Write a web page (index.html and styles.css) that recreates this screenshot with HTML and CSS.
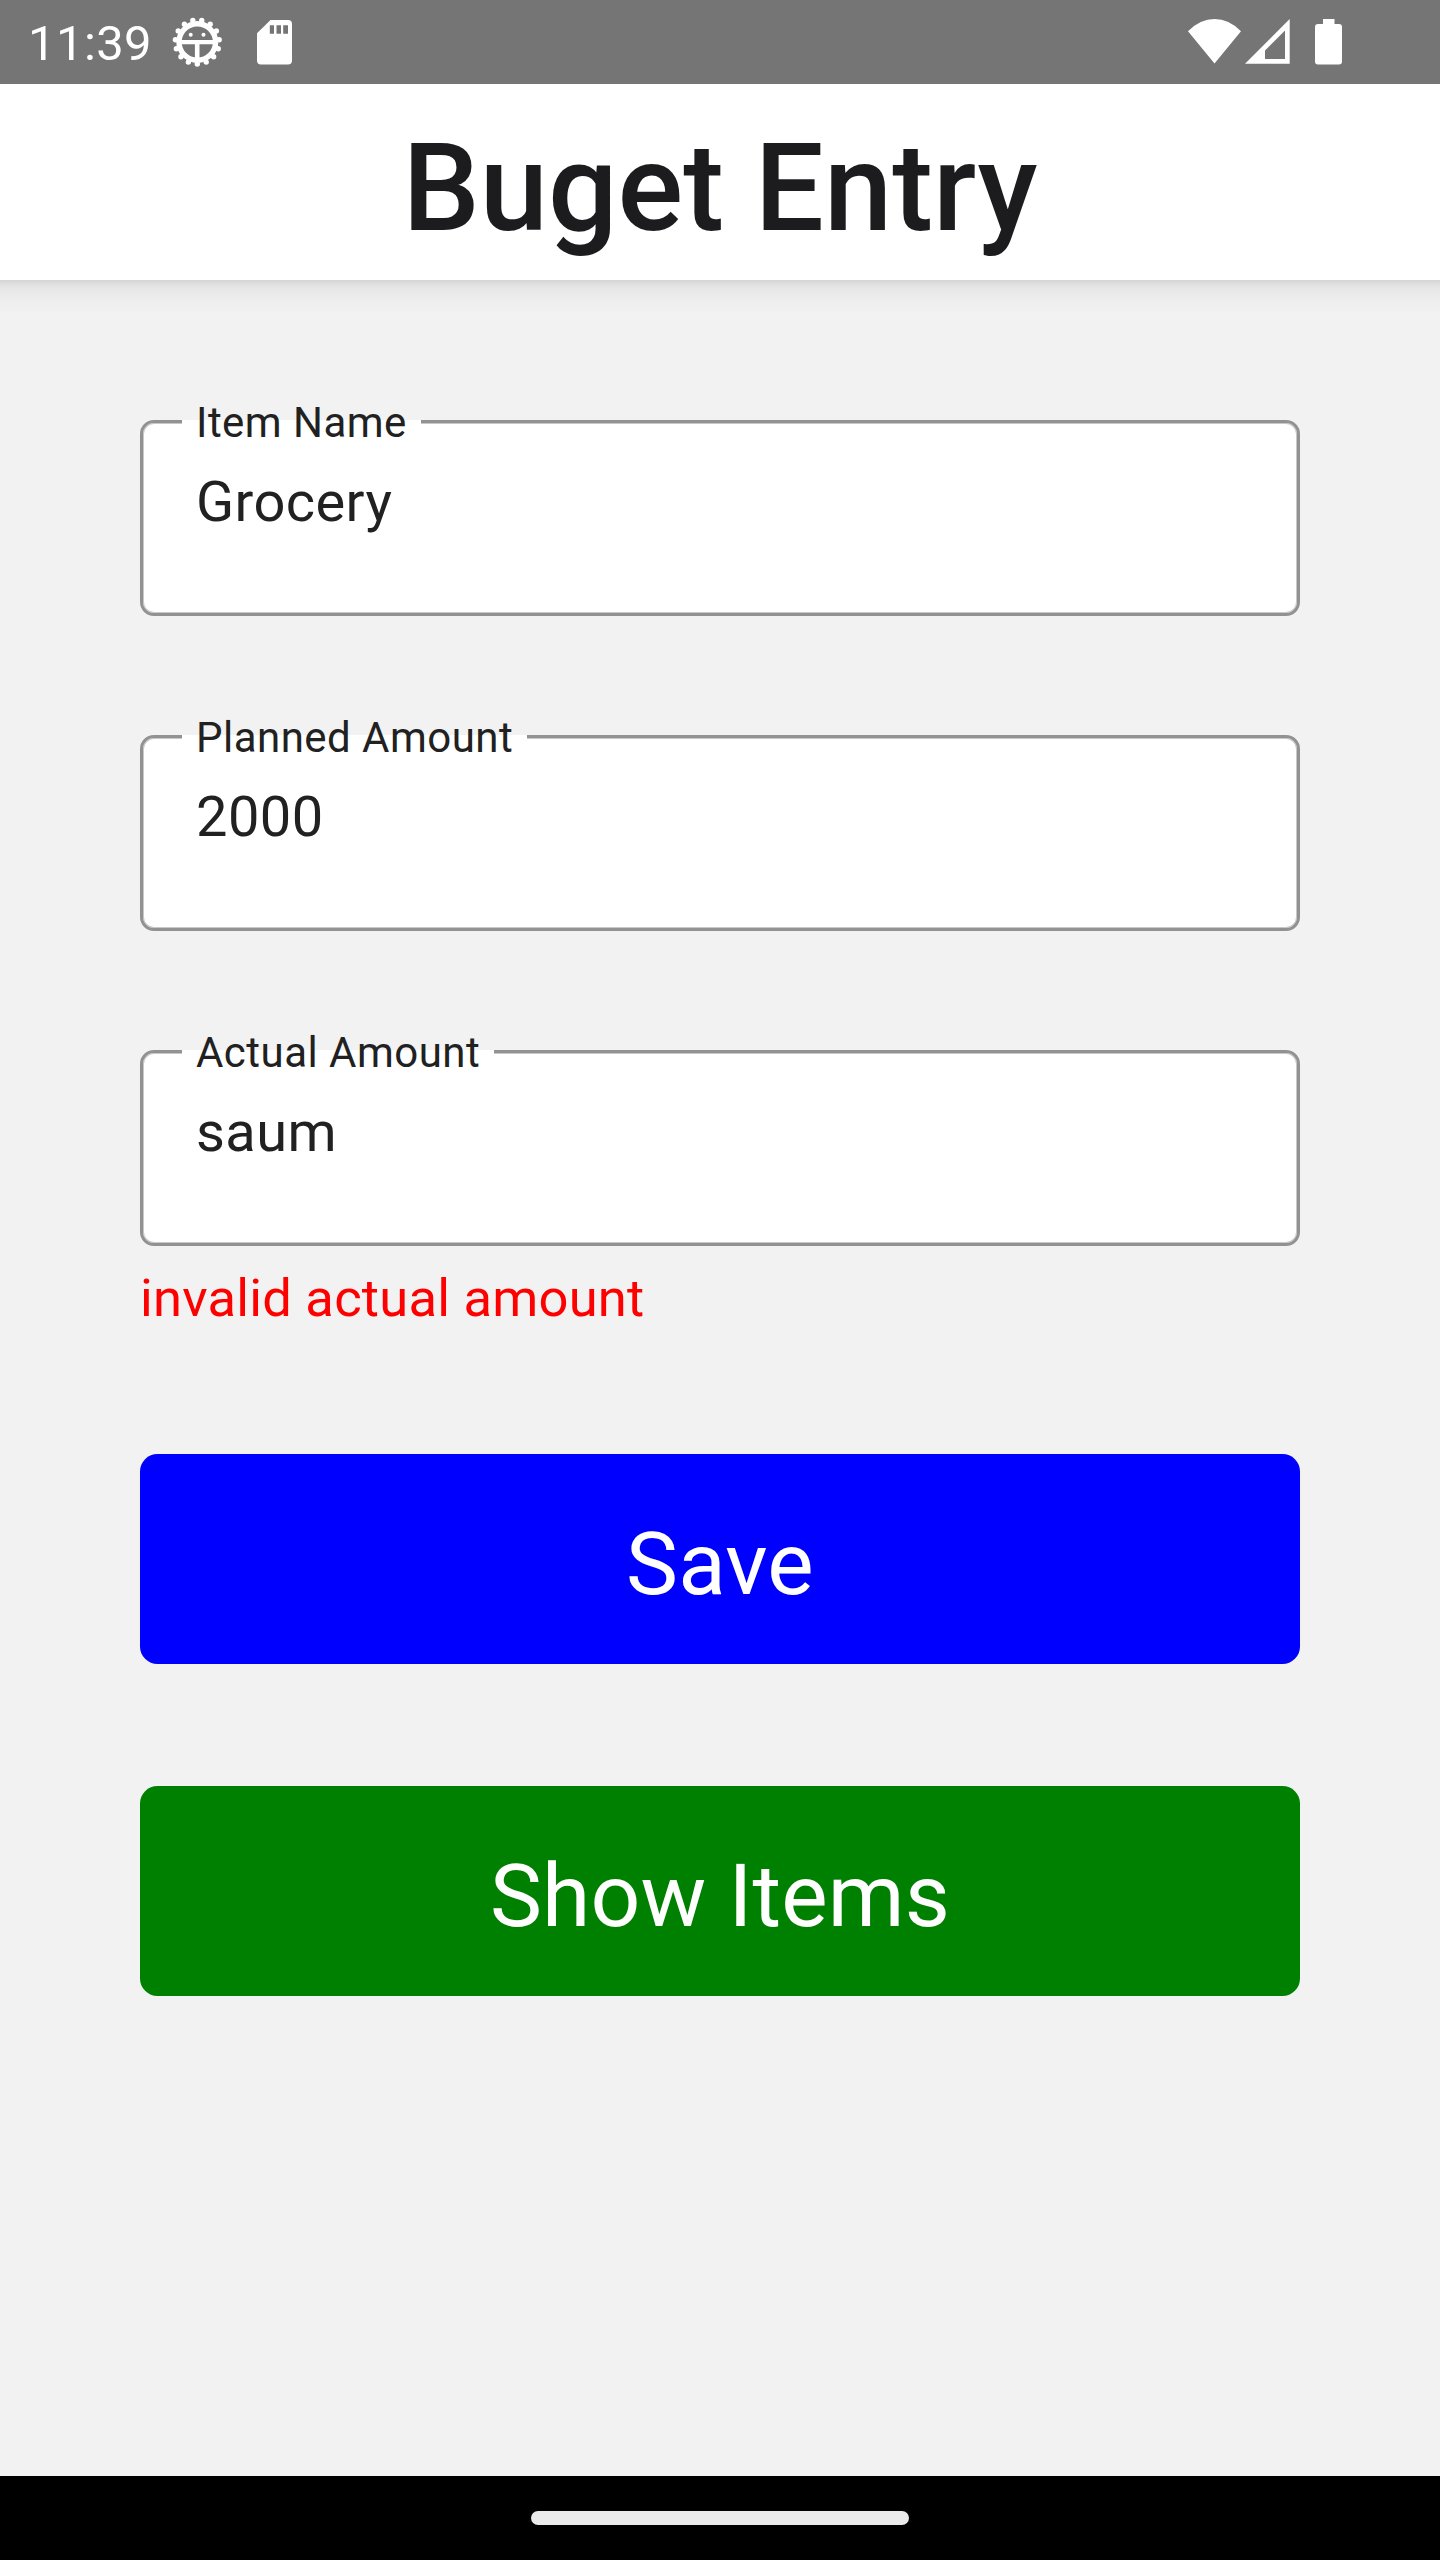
FILE: index.html
```html
<!DOCTYPE html>
<html lang="en">
<head>
  <meta charset="utf-8">
  <title>Buget Entry</title>
  <link rel="stylesheet" href="styles.css">
</head>
<body>
  <div class="status-bar">
    <span class="clock">11:39</span>
    <svg class="icon-debug" viewBox="0 0 50 50" width="50" height="50">
      <circle cx="25.300" cy="25" r="18.3" fill="none" stroke="#fff" stroke-width="5.4"/>
      <circle cx="25.300" cy="25" r="22" fill="none" stroke="#fff" stroke-width="5.4" stroke-linecap="round" pathLength="15" stroke-dasharray="0 1" transform="rotate(90 25.300 25)"/>
      <path d="M9 23h32v4.3H27.500V41h-4.6V27.3H9z" fill="#fff"/>
      <circle cx="18.700" cy="17.7" r="2" fill="#fff"/>
      <circle cx="31.500" cy="17.7" r="2" fill="#fff"/>
    </svg>
    <svg class="icon-sd" viewBox="0 0 35 45" width="35" height="45">
      <path fill="#fff" fill-rule="evenodd" d="M13.5 0H31a4 4 0 0 1 4 4v36.500a4 4 0 0 1-4 4H4a4 4 0 0 1-4-4V13.200zM12.800 5.200v8.500H17V5.200zM19.500 5.200v8.500H24V5.200zM26.200 5.200v8.500H31V5.200z"/>
    </svg>
    <svg class="icon-wifi" viewBox="0 0 53 45" width="53" height="45">
      <path fill="#fff" d="M26.500 44.500L0 12.200Q12 0 26.500 0T53 12.200z"/>
    </svg>
    <svg class="icon-signal" viewBox="0 0 45 45" width="45" height="45">
      <path fill="#fff" fill-rule="evenodd" d="M0 44.700L44.700 0v44.700zM20 40h20V11.500L20 31.500z"/>
    </svg>
    <svg class="icon-battery" viewBox="0 0 27 46" width="27" height="46">
      <path fill="#fff" d="M8 0h11.500v5H24a3 3 0 0 1 3 3v34.500a3 3 0 0 1-3 3H3a3 3 0 0 1-3-3V8a3 3 0 0 1 3-3h5z"/>
    </svg>
  </div>
  <header class="app-header"><h1 class="title">Buget Entry</h1></header>
  <main class="form">
    <div class="field"><span class="label">Item Name</span><span class="value">Grocery</span></div>
    <div class="field"><span class="label">Planned Amount</span><span class="value">2000</span></div>
    <div class="field"><span class="label">Actual Amount</span><span class="value">saum</span></div>
    <p class="error">invalid actual amount</p>
    <button class="button save" type="button">Save</button>
    <button class="button show" type="button">Show Items</button>
  </main>
  <footer class="nav-bar"><div class="handle"></div></footer>
</body>
</html>
```
FILE: styles.css
```css
* {
  box-sizing: border-box;
}

body {
  display: flex;
  flex-direction: column;
  width: 1440px;
  height: 2560px;
  margin: 0;
  font-family: Roboto, sans-serif;
  background: #f2f2f2;
}

.status-bar {
  display: flex;
  align-items: flex-start;
  height: 84px;
  padding: 0 98px 0 28px;
  background: #757575;
}

.clock {
  width: 144px;
  padding-top: 14px;
  font-size: 49px;
  line-height: 60px;
  letter-spacing: 0.4px;
  color: #fff;
}

.icon-debug {
  margin-top: 17px;
}

.icon-sd {
  margin: 20px 0 0 35px;
}

.icon-wifi {
  margin: 19px 4px 0 auto;
}

.icon-signal {
  margin: 19px 25px 0 0;
}

.icon-battery {
  margin-top: 19px;
}

.app-header {
  height: 196px;
  padding-top: 32px;
  background: #fff;
}

.title {
  margin: 0;
  font-size: 122.5px;
  font-weight: 500;
  line-height: 144px;
  letter-spacing: 0.08px;
  text-align: center;
  color: #1c1c1e;
}

.form {
  display: flex;
  flex: 1;
  flex-direction: column;
  padding: 140px 140px 0;
  background: linear-gradient(#d4d4d4 0, #dddddd 3px, #e6e6e6 8px, #ededed 18px, #f2f2f2 34px);
}

.field {
  position: relative;
  height: 196px;
  margin-bottom: 119px;
  padding: 51px 53px 0;
  border: 3px solid #929292;
  border-radius: 14px;
  background: #fff;
  box-shadow: inset 0 0 0 1px #c8c8c8;
}

.field:nth-of-type(3) {
  margin-bottom: 0;
}

.label {
  position: absolute;
  top: -21px;
  left: 39px;
  padding: 0 14px;
  font-size: 42px;
  line-height: 42px;
  letter-spacing: 0.47px;
  white-space: nowrap;
  color: #212121;
  background: linear-gradient(#f2f2f2 18px, #fff 18px);
}

.value {
  display: block;
  font-size: 56px;
  line-height: 56px;
  letter-spacing: 0.42px;
  color: #212121;
}

.error {
  margin: 22px 0 126px;
  font-size: 52.5px;
  line-height: 60px;
  letter-spacing: 0.23px;
  color: #f00;
}

.button {
  height: 210px;
  margin: 0 0 122px;
  padding: 10px 0 0;
  border: 0;
  border-radius: 17.5px;
  font-family: inherit;
  font-size: 87.5px;
  line-height: 100px;
  letter-spacing: 0.2px;
  color: #fff;
}

.save {
  background: #00f;
}

.show {
  background: #008000;
}

.nav-bar {
  display: flex;
  justify-content: center;
  height: 84px;
  padding-top: 35px;
  background: #000;
}

.handle {
  width: 378px;
  height: 14px;
  border-radius: 7px;
  background: #ebebeb;
}
```
